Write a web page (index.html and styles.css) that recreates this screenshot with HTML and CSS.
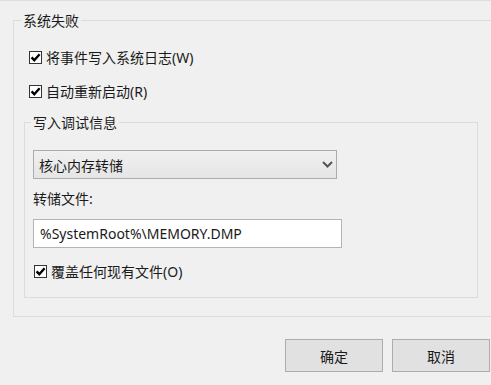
FILE: index.html
```html
<!DOCTYPE html>
<html lang="zh-CN">
<head>
  <meta charset="UTF-8" />
  <title>启动和故障恢复</title>
  <link rel="stylesheet" href="styles.css">
</head>
<body>
  <div class="prev-line"></div>

  <fieldset class="group outer">
    <legend>系统失败</legend>

    <label class="check first">
      <span class="box"><svg width="11" height="11" viewBox="0 0 11 11"><path d="M1.6 5.4 L4.3 8.2 L9.6 2.3" /></svg></span>
      将事件写入系统日志(W)
    </label>
    <label class="check second">
      <span class="box"><svg width="11" height="11" viewBox="0 0 11 11"><path d="M1.6 5.4 L4.3 8.2 L9.6 2.3" /></svg></span>
      自动重新启动(R)
    </label>

    <fieldset class="group inner">
      <legend>写入调试信息</legend>
      <div class="inner-body">
        <div class="select">
          <span>核心内存转储</span>
          <svg width="11" height="7" viewBox="0 0 11 7"><path d="M1 1 L5.5 5.5 L10 1" /></svg>
        </div>
        <div class="field-label">转储文件:</div>
        <div class="textbox">%SystemRoot%\MEMORY.DMP</div>
        <label class="check third">
          <span class="box"><svg width="11" height="11" viewBox="0 0 11 11"><path d="M1.6 5.4 L4.3 8.2 L9.6 2.3" /></svg></span>
          覆盖任何现有文件(O)
        </label>
      </div>
    </fieldset>
  </fieldset>

  <div class="buttons">
    <button>确定</button>
    <button>取消</button>
  </div>
</body>
</html>
```

FILE: styles.css
```css
body {
  margin: 0;
  background: #f0f0f0;
  font-family: "Noto Sans", "Noto Sans CJK SC", sans-serif;
  font-size: 14px;
  color: #1a1a1a;
  overflow: hidden;
}

.prev-line {
  height: 1px;
  margin-right: -20px;
  background: #dedede;
}

.group {
  border: 1px solid #dcdcdc;
  padding: 0;
  margin: 0;
}
.group legend {
  padding: 0 2px;
  line-height: 17px;
}

.outer {
  margin: 11px -20px 0 13px;
}
.outer legend {
  margin-left: 7px;
}

.check {
  display: flex;
  align-items: center;
  height: 20px;
  gap: 4px;
}
.check.first {
  margin: 18px 0 0 15px;
}
.check.second {
  margin: 14px 0 0 15px;
}
.check.third {
  margin: 13px 0 0 1px;
}
.box {
  box-sizing: border-box;
  width: 13px;
  height: 13px;
  border: 1px solid #333;
  background: #fff;
  display: flex;
  align-items: center;
  justify-content: center;
}
.box svg path {
  fill: none;
  stroke: #000;
  stroke-width: 2.4;
}

.inner {
  box-sizing: border-box;
  width: 454px;
  margin: 13px 0 18px 10px;
}
.inner legend {
  margin-left: 6px;
}
.inner-body {
  padding: 19px 0 16px 8px;
}

.select {
  box-sizing: border-box;
  width: 304px;
  height: 29px;
  border: 1px solid #acacac;
  background: linear-gradient(#f0f0f0, #e5e5e5);
  display: flex;
  align-items: center;
  justify-content: space-between;
  padding: 0 3px 0 5px;
}
.select svg path {
  fill: none;
  stroke: #555;
  stroke-width: 2;
}

.field-label {
  line-height: 20px;
  margin-top: 10px;
}

.textbox {
  box-sizing: border-box;
  width: 309px;
  height: 29px;
  margin-top: 10px;
  border: 1px solid #b4b4b4;
  background: #fff;
  line-height: 27px;
  padding-left: 6px;
}

.buttons {
  display: flex;
  justify-content: flex-end;
  gap: 9px;
  margin: 22px 1px 0 0;
}
.buttons button {
  width: 98px;
  height: 33px;
  border: 1px solid #adadad;
  background: #e1e1e1;
  font-family: "Noto Sans", "Noto Sans CJK SC", sans-serif;
  font-size: 14px;
  color: #1a1a1a;
}
```
